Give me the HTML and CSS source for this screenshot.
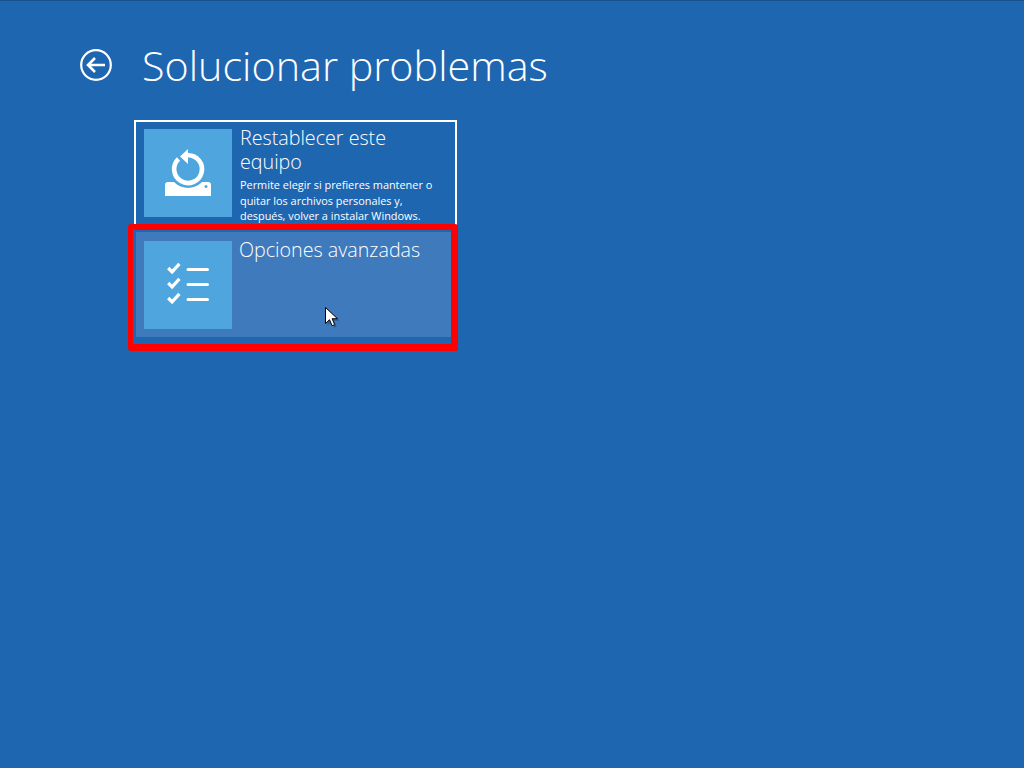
FILE: index.html
```html
<!DOCTYPE html>
<html lang="es">
<head>
<meta charset="utf-8">
<title>Solucionar problemas</title>
<link rel="stylesheet" href="styles.css">
</head>
<body>
<main class="screen">
  <header class="header">
    <svg class="back" width="32" height="32" viewBox="0 0 32 32" aria-hidden="true">
      <circle cx="16" cy="16" r="14.8" fill="none" stroke="#fff" stroke-width="2.2"/>
      <path d="M25 16H8M15 9l-7 7 7 7" fill="none" stroke="#fff" stroke-width="2.6"/>
    </svg>
    <h1 class="title">Solucionar problemas</h1>
  </header>
  <section class="tiles">
    <article class="tile tile-focus">
      <div class="tile-icon">
        <svg width="88" height="88" viewBox="0 0 88 88" aria-hidden="true">
          <path d="M21 67V56q0-3 3-3h40q3 0 3 3v11z" fill="#fff"/>
          <circle cx="62" cy="57.500" r="1.500" fill="#4fa6df"/>
          <circle cx="44" cy="40" r="19" fill="#4fa6df"/>
          <path d="M44 26.200A13.900 13.900 0 1 1 34.500 30" fill="none" stroke="#fff" stroke-width="4.600"/>
          <path d="M44 20l-8 7.500 8 7.500z" fill="#fff"/>
        </svg>
      </div>
      <div class="tile-text">
        <h2 class="tile-title">Restablecer este equipo</h2>
        <p class="tile-desc">Permite elegir si prefieres mantener o quitar los archivos personales y, después, volver a instalar Windows.</p>
      </div>
    </article>
    <article class="tile tile-hover">
      <div class="tile-icon">
        <svg width="88" height="88" viewBox="0 0 88 88" aria-hidden="true">
          <g fill="none" stroke="#fff" stroke-width="3.200">
            <path d="M24.200 27l3.900 3.900 7.300-8M24.200 42l3.900 3.900 7.300-8M24.200 57l3.900 3.900 7.300-8"/>
          </g>
          <g fill="none" stroke="#fff" stroke-width="3" stroke-linecap="round">
            <path d="M44 28.500H63.500M44 43.500H63.500M44 58.500H63.500"/>
          </g>
        </svg>
      </div>
      <div class="tile-text">
        <h2 class="tile-title tile-title-hover">Opciones avanzadas</h2>
      </div>
      <div class="highlight"></div>
      <svg class="cursor" width="16" height="24" viewBox="0 0 16 24" aria-hidden="true">
        <path d="M2.500 2.500v16l4-3.800 2.600 6 2.600-1.100-2.600-5.900h5.400z" fill="#1a3f6e" opacity=".45"/>
        <path d="M.5.500v16l4-3.800 2.600 6 2.600-1.100-2.600-5.900h5.400z" fill="#fff" stroke="#000"/>
      </svg>
    </article>
  </section>
</main>
</body>
</html>
```

FILE: styles.css
```css
* { box-sizing: border-box; }
html, body { margin: 0; height: 100%; }
body {
  background: #1f66b1;
  color: #fff;
  font-family: "Open Sans", "Noto Sans", sans-serif;
  overflow: hidden;
}
.screen {
  height: 768px;
  border-top: 1px solid #17518e;
  padding: 34px 0 0 80px;
}
.header {
  display: flex;
  align-items: center;
  gap: 30px;
  height: 60px;
}
.back { flex: none; }
.title {
  margin: 0;
  font-size: 41.300px;
  font-weight: 300;
  line-height: 60px;
  white-space: nowrap;
}
.tiles {
  display: flex;
  flex-direction: column;
  gap: 1px;
  margin: 25px 0 0 54px;
  width: 323px;
}
.tile {
  position: relative;
  display: flex;
  gap: 8px;
  height: 109px;
  padding: 7px 8px;
  border: 2px solid transparent;
  background-clip: padding-box;
}
.tile-focus { border-color: #fff; }
.tile-hover {
  background-color: #3f7abc;
  padding-top: 9px;
}
.tile-icon {
  flex: none;
  width: 88px;
  height: 88px;
  background: #4fa6df;
}
.tile-icon svg { display: block; }
.tile-text {
  min-width: 0;
  flex: 1;
  margin-top: -3px;
  padding-right: 10px;
}
.tile-title {
  margin: 0;
  font-size: 19.700px;
  font-weight: 300;
  line-height: 24px;
}
.tile-title-hover { margin-left: -1px; }
.tile-desc {
  margin: 3px 0 0;
  font-size: 10.900px;
  font-weight: 400;
  line-height: 15.500px;
}
.highlight {
  position: absolute;
  top: -8px;
  left: -8px;
  width: 330px;
  height: 127px;
  border: solid #fe0000;
  border-width: 6px 7px 7px 5px;
  border-radius: 3px;
}
.cursor {
  position: absolute;
  left: 189px;
  top: 75px;
}
```
